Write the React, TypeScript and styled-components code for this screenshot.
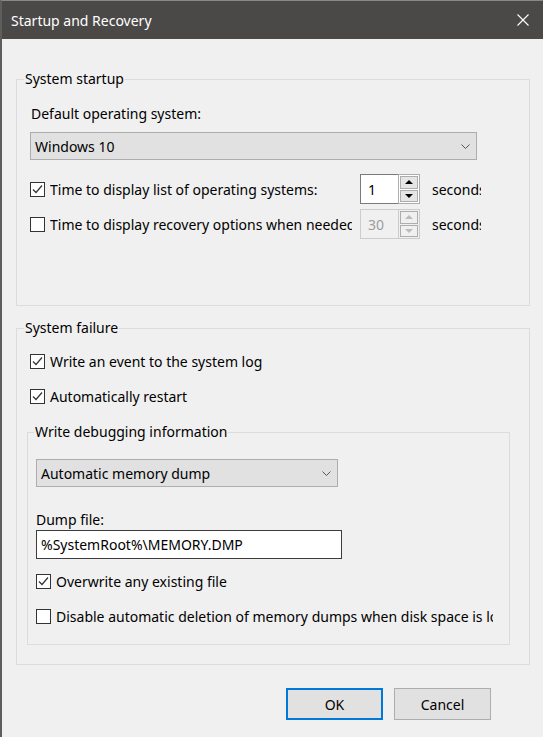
import React from 'react';
import styled, { createGlobalStyle } from 'styled-components';

const GlobalStyle = createGlobalStyle`
  html, body {
    margin: 0;
    padding: 0;
    background: #f0f0f0;
  }
  body {
    font-family: "Noto Sans", "Open Sans", sans-serif;
    font-size: 14px;
    color: #000;
  }
`;

const CheckBox = ({ checked }: { checked?: boolean }) => (
  <Box>
    {checked && (
      <svg width="13" height="13" viewBox="0 0 13 13">
        <polyline points="2,6.5 5,9.5 11,2.5" fill="none" stroke="#333" strokeWidth="1.2" />
      </svg>
    )}
  </Box>
);

const Chevron = () => (
  <svg width="9" height="5" viewBox="0 0 9 5">
    <polyline points="0.5,0.5 4.5,4.5 8.5,0.5" fill="none" stroke="#555" strokeWidth="1" />
  </svg>
);

const Arrow = ({ up, color }: { up?: boolean; color: string }) => (
  <svg width="8" height="4" viewBox="0 0 8 4">
    <polygon points={up ? '0,4 4,0 8,4' : '0,0 8,0 4,4'} fill={color} />
  </svg>
);

const Spinner = ({ value, disabled }: { value: string; disabled?: boolean }) => (
  <SpinBox>
    <SpinInput $disabled={disabled}>{value}</SpinInput>
    <SpinButtons $disabled={disabled}>
      <SpinButton>
        <Arrow up color={disabled ? '#bcbcbc' : '#000'} />
      </SpinButton>
      <SpinButton>
        <Arrow color={disabled ? '#bcbcbc' : '#000'} />
      </SpinButton>
    </SpinButtons>
  </SpinBox>
);

// Startup and Recovery dialog
export default () => (
  <>
    <GlobalStyle />
    <Dialog>
      <TitleBar>
        <span>Startup and Recovery</span>
        <svg width="12" height="12" viewBox="0 0 12 12">
          <path d="M0.5 0.5 L11.5 11.5 M11.5 0.5 L0.5 11.5" stroke="#fff" strokeWidth="1.1" />
        </svg>
      </TitleBar>

      <Body>
        <Group>
          <Legend>System startup</Legend>
          <StartupContent>
            <FieldLabel $indent={1}>Default operating system:</FieldLabel>
            <Combo $width={447} $top={8}>
              <span>Windows 10</span>
              <Chevron />
            </Combo>
            <OptionRow $top={14}>
              <CheckBox checked />
              <Clip $width={302}>Time to display list of operating systems:</Clip>
              <Spinner value="1" />
              <Clip $width={49} $left={7}>seconds</Clip>
            </OptionRow>
            <OptionRow $top={5}>
              <CheckBox />
              <Clip $width={302}>Time to display recovery options when needed:</Clip>
              <Spinner value="30" disabled />
              <Clip $width={49} $left={7}>seconds</Clip>
            </OptionRow>
          </StartupContent>
        </Group>

        <Group $top={12}>
          <Legend>System failure</Legend>
          <FailureContent>
            <CheckRow>
              <CheckBox checked />
              <span>Write an event to the system log</span>
            </CheckRow>
            <CheckRow $top={15}>
              <CheckBox checked />
              <span>Automatically restart</span>
            </CheckRow>

            <InnerGroup>
              <Legend $inner>Write debugging information</Legend>
              <DebugContent>
                <Combo $width={302}>
                  <span>Automatic memory dump</span>
                  <Chevron />
                </Combo>
                <FieldLabel $top={23}>Dump file:</FieldLabel>
                <TextField>%SystemRoot%\MEMORY.DMP</TextField>
                <CheckRow $top={12}>
                  <CheckBox checked />
                  <span>Overwrite any existing file</span>
                </CheckRow>
                <CheckRow $top={15}>
                  <CheckBox />
                  <Clip $width={437}>Disable automatic deletion of memory dumps when disk space is low</Clip>
                </CheckRow>
              </DebugContent>
            </InnerGroup>
          </FailureContent>
        </Group>

        <ButtonBar>
          <Button $default>OK</Button>
          <Button>Cancel</Button>
        </ButtonBar>
      </Body>
    </Dialog>
  </>
);

const Dialog = styled.div`
  width: 543px;
  height: 737px;
  box-sizing: border-box;
  display: flex;
  flex-direction: column;
  border-top: 1px solid #8a8886;
  border-left: 2px solid #5e5e5e;
  background: #f0f0f0;
  overflow: hidden;
`;

const TitleBar = styled.div`
  height: 38px;
  flex: none;
  display: flex;
  align-items: center;
  justify-content: space-between;
  padding: 0 14px 0 9px;
  background: #4b4947;
  color: #fff;
  font-size: 14px;
`;

const Body = styled.div`
  flex: 1;
  display: flex;
  flex-direction: column;
  padding: 30px 13px 0 14px;
`;

const Group = styled.fieldset<{ $top?: number }>`
  margin: ${p => p.$top || 0}px 0 0 0;
  padding: 0;
  min-width: 0;
  border: 1px solid #dcdcdc;
`;

const InnerGroup = styled(Group)`
  margin: 16px 0 0 -3px;
`;

const Legend = styled.legend<{ $inner?: boolean }>`
  margin-left: ${p => (p.$inner ? 6 : 7)}px;
  padding: 0 1px;
  line-height: 20px;
`;

const StartupContent = styled.div`
  padding: 15px 13px 66px 13px;
`;

const FailureContent = styled.div`
  padding: 13px 19px 19px 13px;
`;

const DebugContent = styled.div`
  padding: 17px 8px 18px 8px;
`;

const FieldLabel = styled.div<{ $top?: number; $indent?: number }>`
  margin-top: ${p => p.$top || 0}px;
  padding-left: ${p => p.$indent || 0}px;
  line-height: 20px;
`;

const Combo = styled.div<{ $width: number; $top?: number }>`
  width: ${p => p.$width}px;
  height: 28px;
  box-sizing: border-box;
  margin-top: ${p => p.$top || 0}px;
  display: flex;
  align-items: center;
  justify-content: space-between;
  padding: 0 6px 0 4px;
  background: #e1e1e1;
  border: 1px solid #adadad;
`;

const OptionRow = styled.div<{ $top?: number }>`
  display: flex;
  align-items: center;
  height: 30px;
  margin-top: ${p => p.$top || 0}px;
  gap: 5px;
`;

const CheckRow = styled.div<{ $top?: number }>`
  display: flex;
  align-items: center;
  gap: 5px;
  height: 20px;
  margin-top: ${p => p.$top || 0}px;
  white-space: nowrap;
`;

const Box = styled.span`
  width: 15px;
  height: 15px;
  flex: none;
  box-sizing: border-box;
  display: flex;
  align-items: center;
  justify-content: center;
  border: 1px solid #333;
  background: #fff;
`;

const Clip = styled.span<{ $width: number; $left?: number }>`
  width: ${p => p.$width}px;
  flex: none;
  margin-left: ${p => p.$left || 0}px;
  overflow: hidden;
  white-space: nowrap;
`;

const SpinBox = styled.div`
  display: flex;
  height: 30px;
  width: 60px;
  margin-left: 3px;
  flex: none;
`;

const SpinInput = styled.div<{ $disabled?: boolean }>`
  width: 38px;
  box-sizing: border-box;
  display: flex;
  align-items: center;
  padding-left: 7px;
  background: ${p => (p.$disabled ? '#f0f0f0' : '#fff')};
  color: ${p => (p.$disabled ? '#9c9c9c' : '#000')};
  border: 1px solid ${p => (p.$disabled ? '#cccccc' : '#7a7a7a')};
  border-right: none;
`;

const SpinButtons = styled.div<{ $disabled?: boolean }>`
  width: 22px;
  box-sizing: border-box;
  display: flex;
  flex-direction: column;
  gap: 1px;
  padding: 1px;
  border: 1px solid ${p => (p.$disabled ? '#cccccc' : '#adadad')};
  background: ${p => (p.$disabled ? '#f0f0f0' : '#fff')};
  & > * {
    background: ${p => (p.$disabled ? '#f0f0f0' : '#e5e5e5')};
    border-color: ${p => (p.$disabled ? '#d9d9d9' : '#adadad')};
  }
`;

const SpinButton = styled.div`
  flex: 1;
  display: flex;
  align-items: center;
  justify-content: center;
  border: 1px solid #adadad;
`;

const TextField = styled.div`
  width: 306px;
  height: 29px;
  box-sizing: border-box;
  display: flex;
  align-items: center;
  padding-left: 4px;
  background: #fff;
  border: 1px solid #3c3c3c;
`;

const ButtonBar = styled.div`
  display: flex;
  justify-content: flex-end;
  gap: 11px;
  margin-top: 23px;
  padding-right: 39px;
`;

const Button = styled.div<{ $default?: boolean }>`
  width: 97px;
  height: 32px;
  box-sizing: border-box;
  display: flex;
  align-items: center;
  justify-content: center;
  background: #e1e1e1;
  border: ${p => (p.$default ? '2px solid #0078d7' : '1px solid #adadad')};
`;
